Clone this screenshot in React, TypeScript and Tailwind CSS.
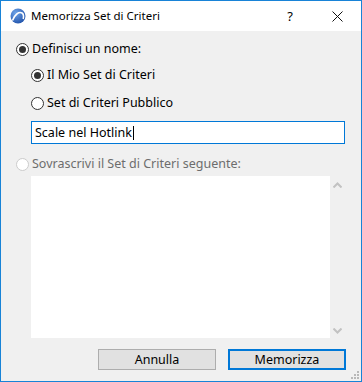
import React from 'react';

const Radio = ({ checked, disabled }: { checked?: boolean; disabled?: boolean }) => (
    <span
        className={`flex h-[13px] w-[13px] shrink-0 items-center justify-center rounded-full border bg-white ${
            disabled ? 'border-[#cccccc]' : 'border-[#333333]'
        }`}
    >
        {checked && <span className="h-[7px] w-[7px] rounded-full bg-[#333333]" />}
    </span>
);

export default function App() {
    return (
        <div
            className="flex h-[382px] w-[362px] flex-col overflow-hidden border border-[#1883d7] bg-[#f0f0f0] text-[12.5px] leading-[14px] text-black"
            style={{ fontFamily: '"Noto Sans", "Open Sans", sans-serif' }}
        >
            {/* title bar */}
            <div className="flex h-[30px] shrink-0 items-center bg-white">
                <svg className="ml-[9px]" width="16" height="16" viewBox="0 0 16 16">
                    <defs>
                        <radialGradient id="g" cx="0.35" cy="0.3" r="0.8">
                            <stop offset="0" stopColor="#6fa4e8" />
                            <stop offset="1" stopColor="#1d4fa8" />
                        </radialGradient>
                    </defs>
                    <circle cx="8" cy="8" r="7.5" fill="url(#g)" />
                    <path d="M2.5 12.5 C5 6, 9 3.5, 12 5 C13.5 6, 13.8 8.5, 13.2 11" stroke="white" strokeWidth="1.6" fill="none" />
                </svg>
                <span className="ml-[5px] text-[11.5px]">Memorizza Set di Criteri</span>
                <span className="ml-auto mr-[39px] text-[13px]">?</span>
                <svg className="mr-[18px]" width="11" height="11" viewBox="0 0 11 11">
                    <path d="M0.5 0.5 L10.5 10.5 M10.5 0.5 L0.5 10.5" stroke="#111" strokeWidth="1" />
                </svg>
            </div>

            {/* body */}
            <div className="flex flex-1 flex-col pl-[15px] pr-[15px]">
                <div className="mt-[11px] flex h-[14px] items-center gap-[3px]">
                    <Radio checked />
                    <span>Definisci un nome:</span>
                </div>
                <div className="ml-[15px] mt-[12px] flex h-[14px] items-center gap-[3px]">
                    <Radio checked />
                    <span>Il Mio Set di Criteri</span>
                </div>
                <div className="ml-[15px] mt-[14px] flex h-[14px] items-center gap-[3px]">
                    <Radio />
                    <span>Set di Criteri Pubblico</span>
                </div>
                <div className="ml-[15px] mt-[11px] flex h-[23px] w-[314px] shrink-0 items-center border border-[#0078d7] bg-white pl-[3px]">
                    <span>Scale nel Hotlink</span>
                    <span className="ml-[1px] h-[14px] w-[1px] bg-black" />
                </div>
                <div className="mt-[13px] flex h-[14px] items-center gap-[3px] text-[#6d6d6d]">
                    <Radio disabled />
                    <span>Sovrascrivi il Set di Criteri seguente:</span>
                </div>
                <div className="ml-[15px] mt-[5px] flex h-[162px] shrink-0">
                    <div className="w-[299px] bg-white" />
                    <div className="flex w-[15px] flex-col items-center justify-between pb-[4px] pt-[6px]">
                        <svg width="9" height="6" viewBox="0 0 9 6">
                            <path d="M0.5 5.5 L4.5 1.5 L8.5 5.5" stroke="#c2c2c2" strokeWidth="2" fill="none" />
                        </svg>
                        <svg width="9" height="6" viewBox="0 0 9 6">
                            <path d="M0.5 0.5 L4.5 4.5 L8.5 0.5" stroke="#c2c2c2" strokeWidth="2" fill="none" />
                        </svg>
                    </div>
                </div>
                <div className="mt-[11px] flex justify-end gap-[12px]">
                    <button className="flex h-[21px] w-[118px] items-center justify-center border border-[#adadad] bg-[#e1e1e1]">
                        Annulla
                    </button>
                    <button className="flex h-[21px] w-[118px] items-center justify-center border-2 border-[#0078d7] bg-[#e1e1e1]">
                        Memorizza
                    </button>
                </div>
                <div className="mt-auto mb-[2px] -mr-[13px] flex justify-end">
                    <svg width="9" height="9" viewBox="0 0 9 9">
                        <g fill="#b8b8b8">
                            <rect x="7" y="1" width="2" height="2" />
                            <rect x="4" y="4" width="2" height="2" />
                            <rect x="7" y="4" width="2" height="2" />
                            <rect x="1" y="7" width="2" height="2" />
                            <rect x="4" y="7" width="2" height="2" />
                            <rect x="7" y="7" width="2" height="2" />
                        </g>
                    </svg>
                </div>
            </div>
        </div>
    );
}
